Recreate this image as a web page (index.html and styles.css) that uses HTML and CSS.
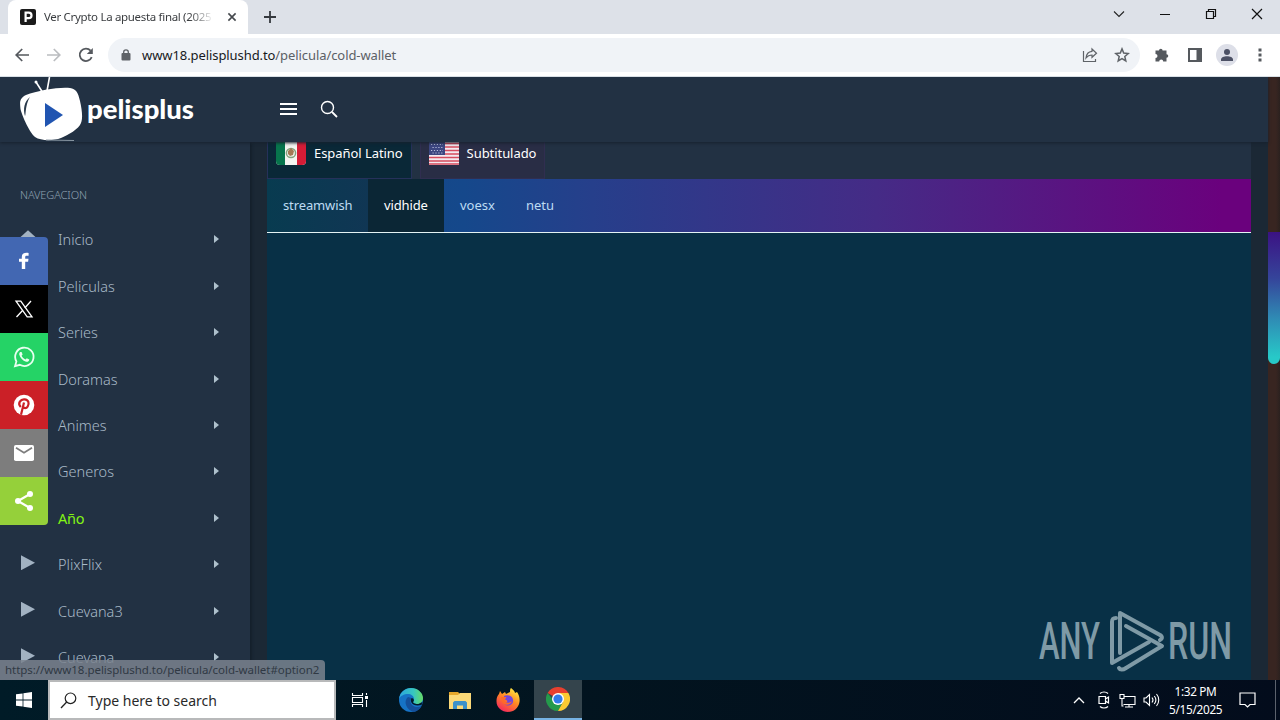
FILE: index.html
```html
<!DOCTYPE html>
<html lang="es">
<head>
    <meta charset="UTF-8">
    <meta name="viewport" content="width=device-width, initial-scale=1.0">
    <title>Ver Crypto La apuesta final (2025)</title>
    <link rel="stylesheet" href="styles.css">
</head>
<body>
    <div class="tabstrip">
        <div class="tab">
            <svg class="favicon" width="16" height="16" viewBox="0 0 16 16"><rect width="16" height="16" rx="2" fill="#1b1b1b"/><path d="M5.6 13V3.7h3.2a2.7 2.7 0 0 1 0 5.4H5.6" fill="none" stroke="#fff" stroke-width="2.2"/></svg>
            <span class="tab-title">Ver Crypto La apuesta final (2025</span>
            <svg width="10" height="10" viewBox="0 0 10 10"><path d="M1.4 1.400l7.200 7.200M8.600 1.400L1.400 8.600" stroke="#45494d" stroke-width="1.600"/></svg>
        </div>
        <svg class="new-tab" width="12" height="12" viewBox="0 0 12 12"><path d="M6 0v12M0 6h12" stroke="#35393e" stroke-width="1.8"/></svg>
        <div class="window-buttons">
            <svg width="12" height="12" viewBox="0 0 12 12"><path d="M1 3.5l5 5 5-5" fill="none" stroke="#222" stroke-width="1.1"/></svg>
            <svg width="12" height="12" viewBox="0 0 12 12"><path d="M1 6.5h10" stroke="#111"/></svg>
            <svg width="12" height="12" viewBox="0 0 12 12"><path d="M1.5 3.5h7v7h-7zM3.5 3.5v-2h7v7h-2" fill="none" stroke="#111" stroke-width="1.2"/></svg>
            <svg width="12" height="12" viewBox="0 0 12 12"><path d="M1 1l10 10M11 1L1 11" stroke="#111" stroke-width="1.2"/></svg>
        </div>
    </div>

    <div class="toolbar">
        <div class="nav-buttons">
            <svg width="16" height="16" viewBox="0 0 16 16"><path d="M15 8H2.500M8.200 2L2.200 8l6 6" fill="none" stroke="#55595e" stroke-width="1.7"/></svg>
            <svg width="16" height="16" viewBox="0 0 16 16"><path d="M1 8h12.500M7.800 2l6 6-6 6" fill="none" stroke="#bbbdc0" stroke-width="1.7"/></svg>
            <svg width="16" height="16" viewBox="0 0 16 16"><path d="M13.700 10.200A6.200 6.200 0 1 1 12.600 3.700" fill="none" stroke="#55595e" stroke-width="1.8"/><path d="M14.800 1v6h-6z" fill="#55595e"/></svg>
        </div>
        <div class="omnibox">
            <svg width="10" height="12" viewBox="0 0 10 12"><rect x=".5" y="4" width="9" height="7.500" rx="1" fill="#5f6368"/><path d="M2.700 5V3a2.300 2.200 0 0 1 4.600 0v2" fill="none" stroke="#5f6368" stroke-width="1.300"/></svg>
            <span class="url"><b>www18.pelisplushd.to</b>/pelicula/cold-wallet</span>
            <svg class="share" width="16" height="16" viewBox="0 0 16 16"><path d="M1.500 4v10.500h12V12M10 2l4.500 4.200L10 10.300V8c-3 0-4.500 1-6 3 .3-3.500 2.200-6.300 6-6.700z" fill="none" stroke="#5f6368" stroke-width="1.200"/></svg>
            <svg width="16" height="16" viewBox="0 0 16 16"><path d="M8 1.900l1.700 4.200 4.500.4-3.400 3 1 4.500L8 11.600 4.200 14l1-4.500-3.400-3 4.500-.4z" fill="none" stroke="#5f6368" stroke-width="1.500"/></svg>
        </div>
        <div class="extensions">
            <svg width="16" height="16" viewBox="0 0 16 16"><path d="M1.500 3.500H5a1.800 1.800 0 1 1 3.600 0h3.900V7.200a1.800 1.800 0 1 1 0 3.600v3.700H9.200a2 2 0 0 0-4 0H1.500v-3.500a2 2 0 0 0 0-4z" fill="#55595e"/></svg>
            <svg width="14" height="14" viewBox="0 0 14 14"><path d="M1 1h12v12H1z" fill="none" stroke="#55595e" stroke-width="2"/><path d="M8.500 1H13v12H8.500z" fill="#55595e"/></svg>
            <svg width="22" height="22" viewBox="0 0 22 22"><circle cx="11" cy="11" r="11" fill="#dddfe8"/><circle cx="11" cy="8" r="3" fill="#4c5165"/><path d="M5 17v-1.500c0-4.500 12-4.500 12 0V17z" fill="#4c5165"/></svg>
            <svg width="4" height="14" viewBox="0 0 4 14"><path d="M.5.500h3v3h-3zM.5 5.500h3v3h-3zM.5 10.500h3v3h-3z" fill="#55595e"/></svg>
        </div>
    </div>

    <div class="page">
        <div class="site">
            <header class="site-header">
                <svg class="logo" width="180" height="65" viewBox="0 0 180 65">
                    <path d="M23 16L16 5M27 14l2.500-14" stroke="#fff" stroke-width="1.600"/>
                    <circle cx="16" cy="5" r="1.500" fill="#fff"/>
                    <path d="M6 18C18 13 42 9.500 50 11c6 1 8 4 10 13 2 9 3 17 1 22-2 6-13 12-20 15-8 3-20 3-26-1C10 56 2 39 .5 32-.5 24 0 21 6 18z" fill="#fff"/>
                    <path d="M10 20c-6 5-7 12-5 19 1 0 0-11 5-19z" fill="#28384a"/>
                    <path d="M25 26l18 12-18 12z" fill="#2155b1"/>
                    <path d="M26 63l28 .5" stroke="#8997a3"/>
                    <text class="logo-text" x="67" y="41.500" textLength="107" lengthAdjust="spacingAndGlyphs">pelisplus</text>
                </svg>
                <svg class="burger" width="17" height="13" viewBox="0 0 17 13"><path d="M0 1h17M0 6h17M0 11h17" stroke="#fff" stroke-width="2"/></svg>
                <svg class="find" width="18" height="18" viewBox="0 0 18 18"><circle cx="7.500" cy="7.500" r="6" fill="none" stroke="#fff" stroke-width="1.400"/><path d="M12 12l5 5" stroke="#fff" stroke-width="1.800"/></svg>
            </header>

            <div class="columns">
                <nav class="sidebar">
                    <div class="sidebar-title">NAVEGACION</div>
                    <a class="menu-item"><i class="mark home"></i>Inicio<i class="arrow"></i></a>
                    <a class="menu-item"><i class="mark"></i>Peliculas<i class="arrow"></i></a>
                    <a class="menu-item"><i class="mark"></i>Series<i class="arrow"></i></a>
                    <a class="menu-item"><i class="mark"></i>Doramas<i class="arrow"></i></a>
                    <a class="menu-item"><i class="mark"></i>Animes<i class="arrow"></i></a>
                    <a class="menu-item"><i class="mark"></i>Generos<i class="arrow"></i></a>
                    <a class="menu-item year"><i class="mark"></i>Año<i class="arrow"></i></a>
                    <a class="menu-item"><i class="mark"></i>PlixFlix<i class="arrow"></i></a>
                    <a class="menu-item"><i class="mark"></i>Cuevana3<i class="arrow"></i></a>
                    <a class="menu-item"><i class="mark"></i>Cuevana<i class="arrow"></i></a>
                </nav>

                <main class="player">
                    <div class="languages">
                        <div class="language active">
                            <svg width="30" height="24" viewBox="0 0 30 24"><rect y="-3" width="30" height="26" rx="4" fill="#f4f4f0"/><path d="M9 -3H4a4 4 0 0 0-4 4v18a4 4 0 0 0 4 4h5z" fill="#07744c"/><path d="M21-3h5a4 4 0 0 1 4 4v18a4 4 0 0 1-4 4h-5z" fill="#d51c36"/><circle cx="15" cy="11" r="4.600" fill="none" stroke="#86a27e" stroke-width="1.500"/><path d="M12 9l3-3 3 3-1 4-3 1-2-2z" fill="#a37a55"/></svg>
                            <span>Español Latino</span>
                        </div>
                        <div class="language">
                            <svg width="30" height="24" viewBox="0 0 30 24"><rect width="30" height="23" fill="#f3e9ef"/><path d="M0 1.500h30M0 5h30M0 8.500h30M0 12h30M0 15.500h30M0 19h30M0 22h30" stroke="#d54b5e" stroke-width="1.700"/><rect width="16" height="13" fill="#3c4680"/><path d="M2 2.500h12M3.500 5.500h10M2 8.500h12M3.500 11h10" stroke="#b8bddb" stroke-width="1.100" stroke-dasharray="1.200 1.700"/></svg>
                            <span>Subtitulado</span>
                        </div>
                    </div>
                    <div class="servers">
                        <a class="server streamwish">streamwish</a>
                        <a class="server current">vidhide</a>
                        <a class="server voesx">voesx</a>
                        <a class="server">netu</a>
                    </div>
                    <div class="video"></div>
                </main>
            </div>
        </div>
        <div class="scrollbar"><div class="thumb"></div></div>

        <div class="share-bar">
            <a class="facebook"><svg width="24" height="24" viewBox="0 0 24 24"><path d="M13.200 20v-7.200h2.900l.4-3h-3.300V8.200c0-1 .3-1.500 1.500-1.500h1.900V3.900c-4-.5-6.800.3-6.800 4v1.900H7v3h2.800V20z" fill="#fff"/></svg></a>
            <a class="twitter"><svg width="24" height="24" viewBox="0 0 24 24"><path d="M4 4.200h4.800L20 19.800h-4.800z" fill="none" stroke="#fff" stroke-width="1.300"/><path d="M19 4l-6.200 7M10.800 13.200L4.500 20" stroke="#fff" stroke-width="1.300"/></svg></a>
            <a class="whatsapp"><svg width="24" height="24" viewBox="0 0 24 24"><path d="M3 21.200l1.400-4.800a9.200 9.200 0 1 1 3.400 3.400z" fill="none" stroke="#e8fff0" stroke-width="1.800"/><path d="M8.300 7c-.9.600-1.300 1.600-1 2.700.9 3.300 3.500 6 6.800 7 1.500.4 3-.5 3.200-2.200l-2.500-1.300-1.300 1.400c-1.800-.8-3-2-3.900-3.800l1-1.200L9.600 7z" fill="#e8fff0"/></svg></a>
            <a class="pinterest"><svg width="24" height="24" viewBox="0 0 24 24"><circle cx="12" cy="12" r="10.300" fill="#fff"/><path d="M9 21.700l3-12.200M8.800 14c-3.800-4 0-8 3.700-7.700 4.200.3 5 4.200 3.200 7.200-1.300 2.300-4 2-4.600.2" fill="none" stroke="#cb2027" stroke-width="2.200"/></svg></a>
            <a class="email"><svg width="24" height="24" viewBox="0 0 24 24"><rect x="2" y="4" width="20" height="16" rx="1.800" fill="#fff"/><path d="M4 6.800l8 5 8-5" fill="none" stroke="#7d7d7d" stroke-width="1.700"/></svg></a>
            <a class="sharethis"><svg width="24" height="24" viewBox="0 0 24 24"><path d="M18 5L6 12l12 7" fill="none" stroke="#fff" stroke-width="2.200"/><circle cx="18" cy="5" r="3" fill="#fff"/><circle cx="6" cy="12" r="3" fill="#fff"/><circle cx="18" cy="19" r="3" fill="#fff"/></svg></a>
        </div>

        <svg class="watermark" width="200" height="64" viewBox="0 0 200 64">
            <g class="watermark-text">
                <text x="1" y="50" textLength="61" lengthAdjust="spacingAndGlyphs">ANY</text>
                <text x="130" y="50" textLength="64" lengthAdjust="spacingAndGlyphs">RUN</text>
            </g>
            <g fill="none" stroke="#7f9aa6" stroke-width="4" stroke-linejoin="round" stroke-linecap="round">
                <path d="M78 9c-3 0-4 1-4 4v41l37-21"/>
                <path d="M82 44V4l40 22c3 2 2 4 0 5"/>
                <path d="M88 17l36 20-36 22c-3 2-6 2-7 0"/>
            </g>
        </svg>
        <div class="status">https://www18.pelisplushd.to/pelicula/cold-wallet#option2</div>
    </div>

    <div class="taskbar">
        <div class="start"><svg width="16" height="16" viewBox="0 0 16 16"><path d="M0 2.300l6.600-.9v6.200H0zM7.400 1.200L16 0v7.600H7.400zM0 8.400h6.600v6.200L0 13.700zM7.400 8.400H16V16l-8.600-1.200z" fill="#fff"/></svg></div>
        <div class="search-box">
            <svg width="17" height="17" viewBox="0 0 17 17"><circle cx="10.500" cy="6.300" r="5.300" fill="none" stroke="#222" stroke-width="1.200"/><path d="M6.700 10L1 16" stroke="#222" stroke-width="1.300"/></svg>
            <span>Type here to search</span>
        </div>
        <div class="app"><svg width="18" height="16" viewBox="0 0 18 16"><path d="M1.500 1v2.500h10V1M1.500 5.500h10v5h-10zM1.500 15v-2.500h10V15M15.500 1v2M15.500 8v7" fill="none" stroke="#fff" stroke-width="1.100"/><path d="M14 4h3v3h-3z" fill="#fff"/></svg></div>
        <div class="app edge">
            <svg width="24" height="24" viewBox="0 0 24 24">
                <defs>
                    <linearGradient id="edgeTop" x1="0" x2="1"><stop offset="0" stop-color="#2ba5df"/><stop offset=".6" stop-color="#37c6c0"/><stop offset="1" stop-color="#66dc65"/></linearGradient>
                </defs>
                <circle cx="12" cy="12" r="12" fill="#1673c6"/>
                <path d="M0 11C1 4 6 0 12 0c7 0 12 5 12 10 0 4-3 6-6 6-3 0-4-1-4-2 1-1 1-2 1-3 0-3-3-5-6-5-4 0-8 2-9 5z" fill="url(#edgeTop)"/>
                <path d="M9 9c-5 4-2 13 6 15 3-.5 6-3 7.500-6-4 2-10 1-11-4-.3-2 .5-3 1-4z" fill="#14509b"/>
                <path d="M12.500 10c-2 4 1 9 10 7l1-3-4 2c-3 0-5-.5-5.500-2 1.500-1 1-4-1.500-4z" fill="#03192a"/>
            </svg>
        </div>
        <div class="app folder"><svg width="22" height="19" viewBox="0 0 22 19"><path d="M0 1h9l2 2h11v15H0z" fill="#e5a72b"/><path d="M0 4h9l2-2h11v16H0z" fill="#fbd978"/><path d="M4 18v-6.500l1.500-1.500h11l1.500 1.500V18h-4v-3.500H8V18z" fill="#3c91c9"/></svg></div>
        <div class="app firefox">
            <svg width="24" height="24" viewBox="0 0 24 24">
                <defs><linearGradient id="fox" x1=".8" y1="0" x2=".2" y2="1"><stop offset="0" stop-color="#fff044"/><stop offset=".45" stop-color="#ff8a22"/><stop offset="1" stop-color="#f52062"/></linearGradient></defs>
                <path d="M4 3l2 3 3-2 1 2 4-2c0-2 0-3 1-4 2 2 4 3 4 5l2-1c2 3 3 6 2.500 10C22.500 20 18 24 12 24S.5 19.500.5 13.500C.5 9 2 7 3 6z" fill="url(#fox)"/>
                <path d="M8 8c4-2 10 0 9 6-1 4-7 5-9 1l3-1c1-2-1-2-3-3z" fill="#7146dc"/>
                <path d="M5 9l5 0c1 1-1 2-2 3 1 3 5 4 8 1-2 6-11 5-11-4z" fill="#ff6a28"/>
            </svg>
        </div>
        <div class="app running">
            <svg width="24" height="24" viewBox="0 0 24 24">
                <path d="M12 12L1.600 6A12 12 0 0 1 22.400 6z" fill="#e8402f"/>
                <path d="M12 12H6.500L1.600 6A12 12 0 0 0 12 24l5-9z" fill="#249a4b"/>
                <path d="M12 6h10.400A12 12 0 0 1 12 24l5-9z" fill="#fbca32"/>
                <circle cx="12" cy="12" r="6" fill="#fff"/><circle cx="12" cy="12" r="4.600" fill="#327cea"/>
            </svg>
        </div>
        <div class="tray">
            <svg width="12" height="8" viewBox="0 0 12 8"><path d="M1 7l5-5 5 5" fill="none" stroke="#fff" stroke-width="1.300"/></svg>
            <svg class="record" width="12" height="18" viewBox="0 0 12 18"><path d="M1 5.500h6.500v7H1zM7.500 8l3-2v6l-3-2M2 2.500c2-2 6-2 8 0M2 15.500c2 2 6 2 8 0" fill="none" stroke="#fff" stroke-width="1.200"/></svg>
            <svg width="17" height="15" viewBox="0 0 17 15"><path d="M5 3.500h11v8H4.500M10 11.500v3M6 14h8M1 1.500h4v4H1zM3 5.500V13h1.500" fill="none" stroke="#fff" stroke-width="1.100"/></svg>
            <svg class="volume" width="17" height="14" viewBox="0 0 17 14"><path d="M1 5h2l3.500-3.500v11L3 9H1zM9 4.500c1.200 1.500 1.200 3.500 0 5M11.300 3c2 2.500 2 5.500 0 8M13.500 1c3 3.500 3 8.500 0 12" fill="none" stroke="#fff" stroke-width="1.100"/></svg>
        </div>
        <div class="clock"><div class="time">1:32 PM</div><div class="date">5/15/2025</div></div>
        <svg class="notice" width="17" height="16" viewBox="0 0 17 16"><path d="M1 1h15v11.500h-5L8.500 15 6 12.500H1z" fill="none" stroke="#fff" stroke-width="1.200"/></svg>
        <div class="show-desktop"></div>
    </div>
</body>
</html>
```
FILE: styles.css
```css
* {
    box-sizing: border-box;
}
body {
    margin: 0;
    width: 1280px;
    height: 720px;
    overflow: hidden;
    display: flex;
    flex-direction: column;
    font-family: "Noto Sans", "Open Sans", sans-serif;
    font-size: 12px;
}
svg {
    display: block;
    flex: none;
}

/* browser */
.tabstrip {
    height: 34px;
    display: flex;
    align-items: center;
    padding-left: 8px;
    background: #dde1e8;
}
.tab {
    width: 240px;
    height: 34px;
    display: flex;
    align-items: center;
    padding: 0 11px 0 12px;
    background: #fff;
    border-radius: 8px 8px 0 0;
}
.tab-title {
    flex: 1;
    margin: 0 10px 2px 8px;
    white-space: nowrap;
    font-size: 11.5px;
    letter-spacing: -0.32px;
    color: #3a3d40;
    -webkit-mask-image: linear-gradient(90deg, #000 84%, transparent 98%);
    mask-image: linear-gradient(90deg, #000 84%, transparent 98%);
}
.new-tab {
    margin-left: 16px;
}
.window-buttons {
    margin-left: auto;
    margin-right: 17px;
    padding-bottom: 6px;
    display: flex;
    gap: 34px;
}
.toolbar {
    height: 43px;
    display: flex;
    align-items: center;
    background: #fff;
    border-bottom: 1px solid #d9e0e6;
}
.nav-buttons {
    display: flex;
    gap: 16px;
    padding-left: 14px;
    width: 108px;
}
.omnibox {
    width: 1032px;
    height: 34px;
    display: flex;
    align-items: center;
    padding: 0 10px 0 13px;
    background: #f0f3f7;
    border-radius: 17px;
}
.url {
    margin-left: 11px;
    font-size: 13px;
    letter-spacing: -0.08px;
    color: #5b6066;
}
.url b {
    font-weight: 400;
    color: #17191c;
}
.share {
    margin-left: auto;
    margin-right: 16px;
}
.extensions {
    flex: 1;
    display: flex;
    align-items: center;
    gap: 17px;
    padding-left: 14px;
}
.extensions svg:nth-child(2) {
    margin: 0 -3px 0 1px;
}
.extensions svg:nth-child(4) {
    margin-left: 3px;
}

/* site */
.page {
    position: relative;
    height: 603px;
    display: flex;
    overflow: hidden;
    background: #1b2835;
}
.site {
    width: 1268px;
    display: flex;
    flex-direction: column;
}
.site-header {
    height: 65px;
    flex: none;
    display: flex;
    align-items: center;
    padding-left: 20px;
    background: #223143;
    box-shadow: 0 1px 3px #17212d;
    z-index: 1;
}
.burger {
    margin: 0 23px 0 80px;
}
.find {
    margin-bottom: 2px;
}
.logo-text {
    font: 900 26px Lato, sans-serif;
    fill: #fff;
}
.columns {
    height: 538px;
    display: flex;
}
.sidebar {
    width: 250px;
    background: #223143;
    box-shadow: 1px 0 3px #111c27;
    overflow: hidden;
}
.sidebar-title {
    height: 74px;
    padding: 45px 20px 0;
    font-size: 11px;
    line-height: 16px;
    letter-spacing: -0.1px;
    font-weight: 300;
    color: #8fa1b1;
}
.menu-item {
    display: flex;
    align-items: center;
    height: 46.45px;
    padding: 0 31px 0 21px;
    font-size: 14.5px;
    font-weight: 300;
    color: #a9bac8;
}
.mark {
    width: 14px;
    height: 15px;
    margin: -3px 23px 0 0;
    background: #a2b2c2;
    clip-path: polygon(0 0, 100% 50%, 0 100%);
}
.home {
    width: 16px;
    margin: -3px 22px 0 -1px;
    clip-path: polygon(50% 0, 100% 48%, 100% 100%, 0 100%, 0 48%);
}
.arrow {
    margin-left: auto;
    border-left: 5px solid #aec0cc;
    border-top: 4px solid transparent;
    border-bottom: 4px solid transparent;
}
.year {
    font-weight: 400;
    letter-spacing: -0.3px;
    color: #83f514;
}
.player {
    width: 984px;
    margin-left: 17px;
    display: flex;
    flex-direction: column;
    background: #223143;
}
.languages {
    height: 37px;
    display: flex;
    gap: 8px;
}
.language {
    height: 37px;
    display: flex;
    gap: 8px;
    padding: 0 8px;
    background: #292d45;
    border: 1px solid #302e50;
    border-top: 0;
    font-size: 13px;
    letter-spacing: -0.06px;
    line-height: 23px;
    color: #fff;
}
.active {
    background: #0a2837;
    border-color: #26315a;
}
.servers {
    height: 54px;
    display: flex;
    background: linear-gradient(90deg, #124b82 0%, #15488b 20%, #263f8b 33%, #452b86 62%, #6a017d 97%);
    border-bottom: 1px solid #e4f3f4;
}
.server {
    padding: 0 16px;
    font-size: 13px;
    line-height: 53px;
    color: #bddcf3;
}
.streamwish {
    width: 101px;
    letter-spacing: -0.12px;
    background: linear-gradient(90deg, #083b50, #103654);
}
.current {
    width: 76px;
    letter-spacing: -0.12px;
    background: #0b2635;
    color: #fff;
}
.voesx {
    width: 66px;
}
.video {
    flex: 1;
    background: #083046;
}
.scrollbar {
    width: 12px;
    padding-top: 155px;
    background: linear-gradient(90deg, #382521 65%, #2b211f);
}
.thumb {
    height: 132px;
    border-radius: 0 0 6px 6px;
    background: linear-gradient(#3b1283, #35449a 35%, #2f8ab4 65%, #27c9c8 95%);
}

/* overlays */
.share-bar {
    position: absolute;
    left: 0;
    top: 160px;
    width: 48px;
    border-radius: 0 4px 4px 0;
    overflow: hidden;
    z-index: 2;
}
.share-bar a {
    height: 48px;
    display: flex;
    align-items: center;
    justify-content: center;
}
.facebook {
    background: #4267b2;
}
.twitter {
    background: #000;
}
.whatsapp {
    background: #25d366;
}
.pinterest {
    background: #cb2027;
}
.email {
    background: #7d7d7d;
}
.sharethis {
    background: #95d03a;
}
.watermark {
    position: absolute;
    left: 1038px;
    top: 532px;
}
.watermark-text {
    font: 500 52px Roboto, sans-serif;
    fill: #7f9aa6;
}
.status {
    position: absolute;
    left: 0;
    bottom: 0;
    width: 325px;
    height: 20px;
    padding-left: 5px;
    border-radius: 0 4px 0 0;
    background: rgba(122, 130, 142, 0.85);
    font-size: 11.5px;
    letter-spacing: -0.04px;
    line-height: 20px;
    color: #303944;
    white-space: nowrap;
    z-index: 3;
}

/* taskbar */
.taskbar {
    height: 40px;
    display: flex;
    align-items: center;
    background: linear-gradient(90deg, #001b27, #02141f 45%, #030c1c);
    color: #fff;
}
.start {
    width: 48px;
    padding-left: 16px;
}
.search-box {
    width: 288px;
    height: 40px;
    display: flex;
    align-items: center;
    gap: 11px;
    padding-left: 10px;
    background: #fff;
    border: 2px solid #b8b9ba;
    font-size: 14px;
    color: #292929;
}
.app {
    width: 48px;
    height: 40px;
    display: flex;
    align-items: center;
    justify-content: center;
}
.edge {
    width: 53px;
}
.folder {
    width: 45px;
}
.firefox {
    width: 52px;
}
.running {
    width: 48px;
    background: #34444c;
    border-bottom: 2px solid #77b3e4;
}
.tray {
    margin-left: auto;
    margin-right: 9px;
    display: flex;
    align-items: center;
    gap: 10px;
}
.record {
    margin: 0 -1px 0 3px;
}
.volume {
    margin-left: -3px;
}
.clock {
    width: 53px;
    padding-bottom: 1px;
    font-size: 11.8px;
    letter-spacing: -0.35px;
    line-height: 18px;
    text-align: center;
    white-space: nowrap;
}
.date {
    letter-spacing: -0.3px;
}
.notice {
    margin: 0 19px 0 17px;
}
.show-desktop {
    width: 5px;
    height: 40px;
    border-left: 1px solid #5c626d;
}
```
